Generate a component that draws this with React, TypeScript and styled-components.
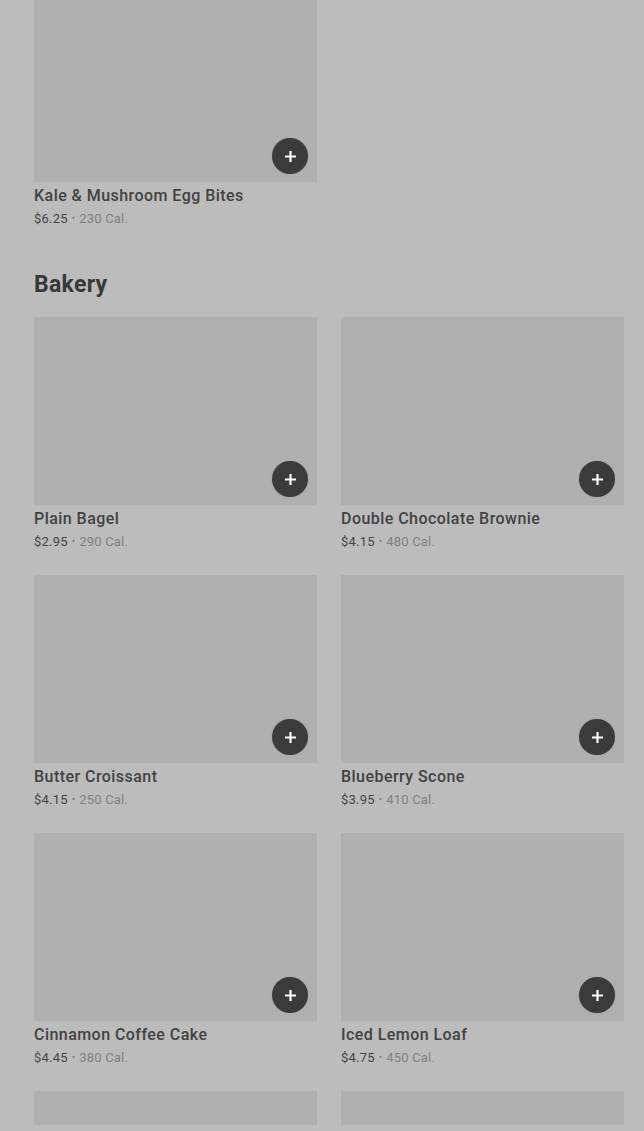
import React from "react";
import styled, { createGlobalStyle } from "styled-components";

const GlobalStyle = createGlobalStyle`
  html, body {
    margin: 0;
    padding: 0;
    background: #bcbcbc;
    font-family: Roboto, "Liberation Sans", sans-serif;
    overflow: hidden;
  }
`;

const Page = styled.main`
  width: 644px;
  height: 1131px;
  overflow: hidden;
  padding: 0 20px 0 34px;
  box-sizing: border-box;
  margin-top: -6px;
`;

const Section = styled.section<{ $first?: boolean }>`
  margin-top: ${(p) => (p.$first ? "0" : "43px")};
`;

const SectionTitle = styled.h2`
  margin: 0 0 18px;
  color: #383838;
  font-size: 23px;
  line-height: 28px;
  font-weight: 700;
  letter-spacing: 0.3px;
`;

const Grid = styled.div`
  display: grid;
  grid-template-columns: 283px 283px;
  column-gap: 24px;
  row-gap: 24px;
`;

const Card = styled.article`
  display: flex;
  flex-direction: column;
`;

const Photo = styled.div`
  position: relative;
  height: 188px;
  background: #b0b0b0;
  box-shadow: 0 1px 0 #b8b8b8;
`;

const AddButton = styled.button`
  position: absolute;
  right: 9px;
  bottom: 8px;
  width: 36px;
  height: 36px;
  border-radius: 50%;
  border: none;
  padding: 0;
  background: #3b3b3b;
  display: flex;
  align-items: center;
  justify-content: center;
  box-shadow: 0 0 2px rgba(0, 0, 0, 0.15);
`;

const ItemName = styled.h3`
  margin: 4px 0 0;
  height: 20px;
  color: #424242;
  font-size: 16px;
  line-height: 20px;
  font-weight: 500;
  letter-spacing: 0.45px;
`;

const Meta = styled.p`
  margin: 4px 0 0;
  height: 18px;
  display: flex;
  align-items: center;
  font-size: 13px;
  line-height: 18px;
  color: #808080;
  letter-spacing: 0.2px;
`;

const Price = styled.span`
  color: #454545;
`;

const Dot = styled.span`
  margin: 0 4px;
  font-size: 10px;
  line-height: 10px;
`;

type Item = { name: string; price: string; cal: number };

const breakfast: Item[] = [
  { name: "Kale & Mushroom Egg Bites", price: "$6.25", cal: 230 },
];

const bakery: Item[] = [
  { name: "Plain Bagel", price: "$2.95", cal: 290 },
  { name: "Double Chocolate Brownie", price: "$4.15", cal: 480 },
  { name: "Butter Croissant", price: "$4.15", cal: 250 },
  { name: "Blueberry Scone", price: "$3.95", cal: 410 },
  { name: "Cinnamon Coffee Cake", price: "$4.45", cal: 380 },
  { name: "Iced Lemon Loaf", price: "$4.75", cal: 450 },
  { name: "Cheese Danish", price: "$3.75", cal: 290 },
  { name: "Banana Nut Bread", price: "$3.95", cal: 420 },
];

function PlusIcon() {
  return (
    <svg width="13" height="13" viewBox="0 0 13 13">
      <path d="M6.5 1v11M1 6.5h11" stroke="#fff" strokeWidth="2.2" />
    </svg>
  );
}

function MenuCard({ item }: { item: Item }) {
  return (
    <Card>
      <Photo>
        <AddButton aria-label={`Add ${item.name}`}>
          <PlusIcon />
        </AddButton>
      </Photo>
      <ItemName>{item.name}</ItemName>
      <Meta>
        <Price>{item.price}</Price>
        <Dot>•</Dot>
        {item.cal} Cal.
      </Meta>
    </Card>
  );
}

export default function App() {
  return (
    <>
      <GlobalStyle />
      <Page>
        <Section $first>
          <Grid>
            {breakfast.map((item) => (
              <MenuCard key={item.name} item={item} />
            ))}
          </Grid>
        </Section>
        <Section>
          <SectionTitle>Bakery</SectionTitle>
          <Grid>
            {bakery.map((item) => (
              <MenuCard key={item.name} item={item} />
            ))}
          </Grid>
        </Section>
      </Page>
    </>
  );
}
